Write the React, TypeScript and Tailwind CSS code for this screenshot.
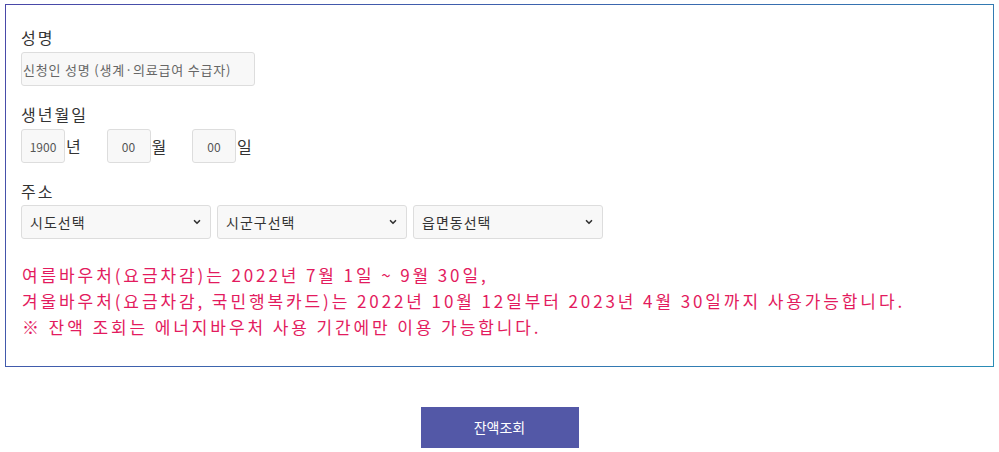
import { ChevronDown } from "lucide-react";

const font = "font-['Noto_Sans_CJK_KR','Noto_Sans',sans-serif]";

function DateBox({ value, unit }: { value: string; unit: string }) {
  return (
    <div className="flex items-center w-[85.5px]">
      <input
        readOnly
        value={value}
        className="w-[44px] h-[34px] rounded-[3px] border border-[#dddddd] bg-[#f8f8f8] text-center text-[12px] text-[#555] outline-none"
      />
      <span className="ml-[1px] text-[16px] text-[#333]">{unit}</span>
    </div>
  );
}

function Select({ label }: { label: string }) {
  return (
    <div className="relative w-[190px]">
      <select className="w-full h-[34px] appearance-none rounded-[3px] border border-[#dddddd] bg-[#f8f8f8] pl-[8px] text-[14px] tracking-[1px] text-[#333] outline-none">
        <option>{label}</option>
      </select>
      <ChevronDown
        size={10}
        strokeWidth={4}
        className="absolute right-[9px] top-[12px] text-[#333] pointer-events-none"
      />
    </div>
  );
}

export default function App() {
  return (
    <div className={`${font} w-[999px] h-[452px] bg-white pt-[4px] px-[5px]`}>
      {/* Form box */}
      <div className="border border-transparent [border-image:linear-gradient(135deg,#4a48a8,#2a8cb6)_1] px-[15px] pt-[22px] pb-[26px]">
        <div className="text-[16px] leading-[20px] text-[#333] tracking-[2px]">성명</div>
        <input
          readOnly
          placeholder="신청인 성명 (생계·의료급여 수급자)"
          className="mt-[5px] w-[234px] h-[34px] rounded-[3px] border border-[#dddddd] bg-[#f8f8f8] px-[1px] text-[13px] tracking-[0.8px] placeholder:text-[#666] outline-none"
        />

        <div className="mt-[18px] text-[16px] leading-[20px] text-[#333] tracking-[2px]">생년월일</div>
        <div className="mt-[5px] flex">
          <DateBox value="1900" unit="년" />
          <DateBox value="00" unit="월" />
          <DateBox value="00" unit="일" />
        </div>

        <div className="mt-[18px] text-[16px] leading-[20px] text-[#333] tracking-[2px]">주소</div>
        <div className="mt-[4px] flex gap-[6px]">
          <Select label="시도선택" />
          <Select label="시군구선택" />
          <Select label="읍면동선택" />
        </div>

        <div className="mt-[23px] text-[17px] leading-[26px] text-[#e31b5e] tracking-[2.9px] pl-[1px]">
          <p>여름바우처(요금차감)는 2022년 7월 1일 ~ 9월 30일,</p>
          <p>겨울바우처(요금차감, 국민행복카드)는 2022년 10월 12일부터 2023년 4월 30일까지 사용가능합니다.</p>
          <p>※ 잔액 조회는 에너지바우처 사용 기간에만 이용 가능합니다.</p>
        </div>
      </div>

      <div className="mt-[40px] flex justify-center">
        <button className="w-[158px] h-[41px] bg-[#5358a7] text-white text-[14px]">잔액조회</button>
      </div>
    </div>
  );
}
